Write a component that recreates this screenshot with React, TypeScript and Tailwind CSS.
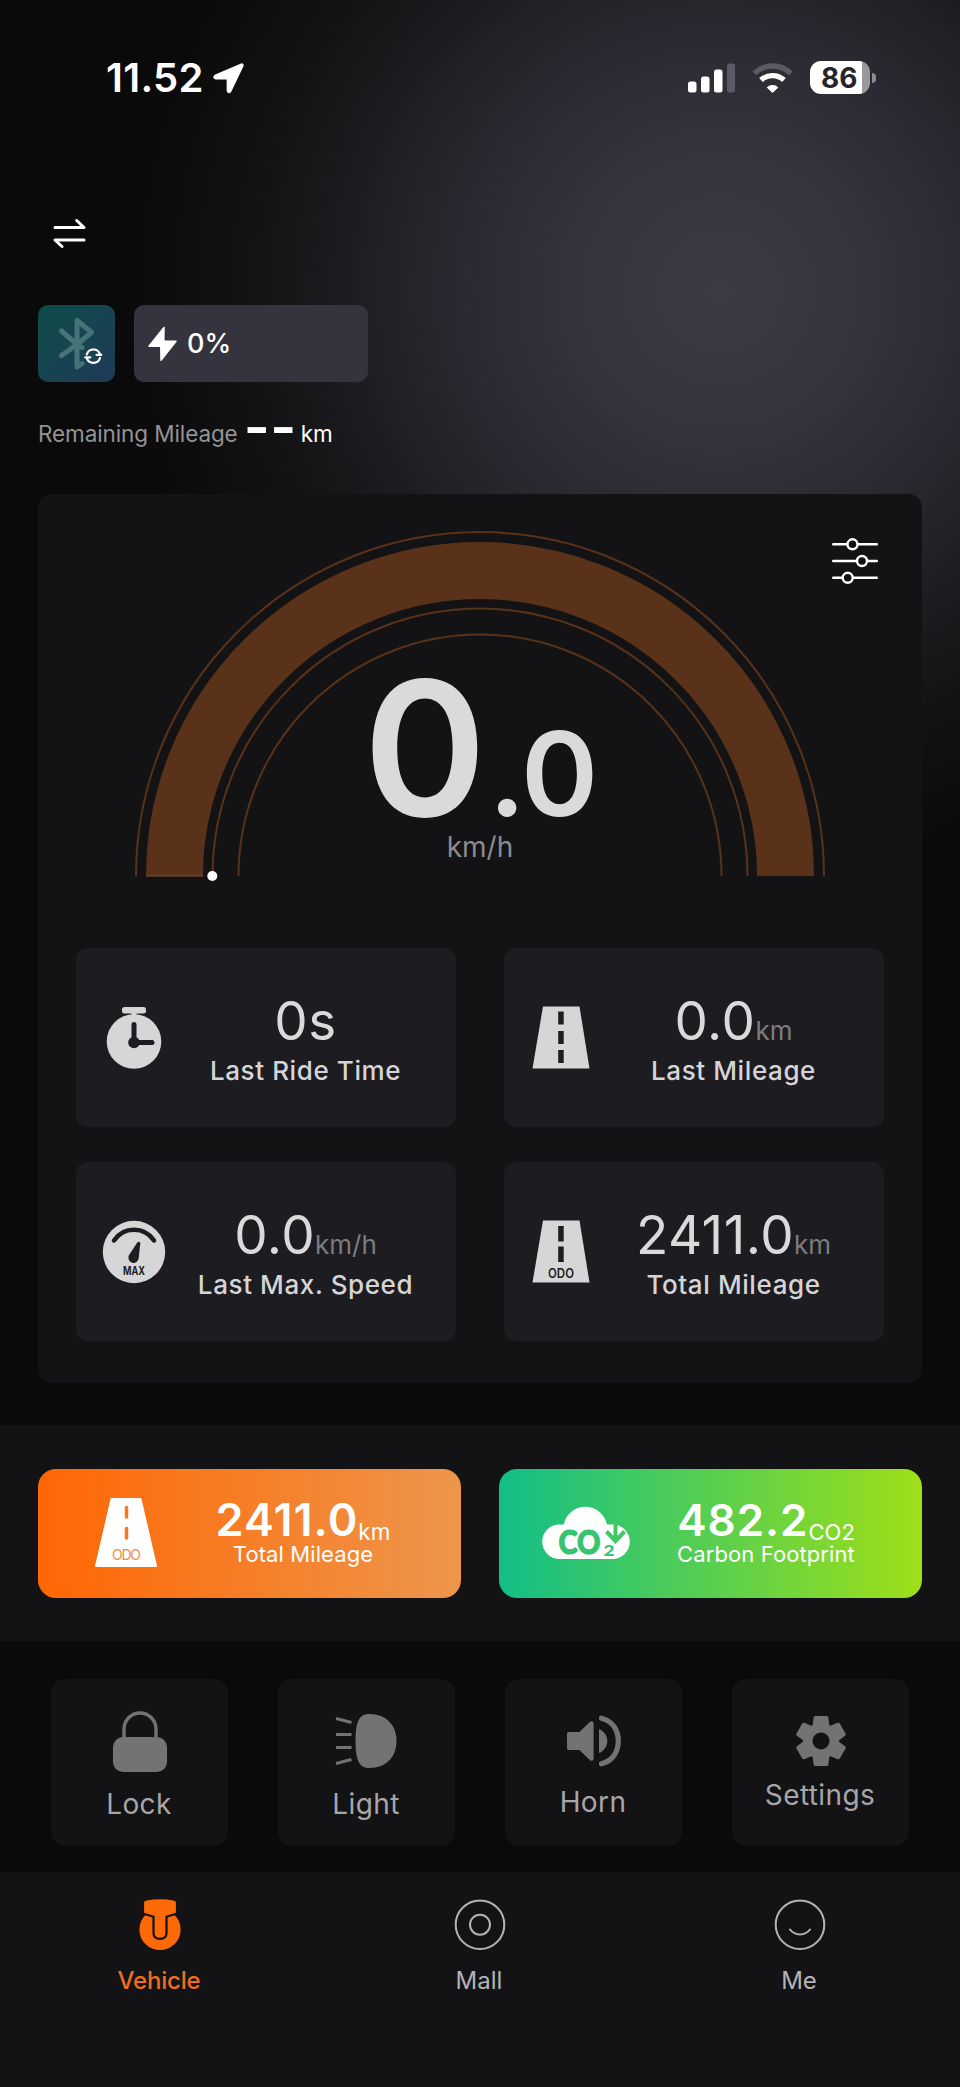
import React from 'react';

interface StatTileProps {
  icon: React.ReactNode;
  value: string;
  unit?: string;
  label: string;
}

interface ActionButtonProps {
  icon: React.ReactNode;
  label: string;
  labelClass: string; // Icons differ in height, so each label carries its own offset
}

/** Top status bar: clock, signal, wifi and battery. */
const StatusBar: React.FC = () => (
  <div className="flex h-12 items-center justify-between pl-[106px] pr-[84px]">
    <div className="flex items-center gap-[8px]">
      <span className="text-[40px] leading-[48px] font-semibold tracking-[0.3px]">11.52</span>
      <svg width="33" height="33" viewBox="0 0 32 32" fill="currentColor">
        <path
          d="M28.6 2.4 3 13.4c-1.3.7-.9 2.5.6 2.6H15.2v11.8c.1 1.6 2 2 2.7.5L29.6 3.6c.4-.9-.2-1.5-1-1.2z"
          stroke="currentColor"
          strokeWidth="2"
          strokeLinejoin="round"
        />
      </svg>
    </div>
    <div className="flex items-center pb-px">
      <svg width="48" height="32" viewBox="0 0 48 32" fill="white">
        <rect x="0" y="19.5" width="8.5" height="11" rx="2.5" />
        <rect x="13" y="14.5" width="8.5" height="16" rx="2.5" />
        <rect x="26" y="7.5" width="8.5" height="23" rx="2.5" />
        <rect x="39" y="1.5" width="8" height="29" rx="2.5" fill="#5b5a63" />
      </svg>
      <svg className="ml-4" width="41" height="32" viewBox="0 0 41 32" fill="none">
        <path d="M2.2 11.4A26.5 26.5 0 0 1 38.8 11.4" stroke="#5b5a63" strokeWidth="5.4" />
        <path d="M9 18.1a17 17 0 0 1 23 0" stroke="white" strokeWidth="5.4" />
        <path d="M20.5 31l-5.8-5.6a8.4 8.4 0 0 1 11.6 0z" fill="white" />
      </svg>
      <div className="ml-[17px] flex h-[33px] w-[60px] items-center overflow-hidden rounded-[11px] bg-linear-to-r from-white from-87% to-[#98989d] to-87%">
        <span className="pl-[11px] text-[28px] leading-none font-bold text-[#26252b]">86</span>
      </div>
      <div className="ml-[2px] h-[10px] w-1 rounded-r-full bg-[#8b8a90]" />
    </div>
  </div>
);

const BluetoothBadge: React.FC = () => (
  <div className="h-[77px] w-[77px] rounded-[10px] bg-linear-to-br from-[#0c4c49] to-[#1e3a57]">
    <svg width="77" height="77" viewBox="0 0 77 77" fill="none" strokeLinecap="round" strokeLinejoin="round">
      <path
        d="M23.5 26 39 39.5 53.5 27.3 39 15.5V62l5-3.5M39 39.5 23.5 50.5M39 39.5l5 3"
        stroke="#457378"
        strokeWidth="5"
      />
      <g stroke="white" strokeWidth="2.2">
        <path d="M48.8 49.4a6.9 6.9 0 0 1 13.2 0M48.8 53a6.9 6.9 0 0 0 13.2 0" />
        <path d="M58.5 49.8h4.8M47.3 52.4h5" />
      </g>
    </svg>
  </div>
);

/** Half circle speed gauge with the current speed inside. */
const SpeedGauge: React.FC = () => (
  <div className="relative mx-auto h-[352px] w-[700px]">
    <svg width="700" height="352" viewBox="0 0 700 352" fill="none" stroke="#593219">
      <path d="M6 346a344 344 0 0 1 688 0" strokeWidth="2" />
      <path d="M44.5 346a305.5 305.5 0 0 1 611 0" strokeWidth="57" />
      <path d="M82.5 346a267.5 267.5 0 0 1 535 0" strokeWidth="2" />
      <path d="M108.5 346a241.5 241.5 0 0 1 483 0" strokeWidth="2" />
      <path d="M16 346h57" stroke="#84502a" strokeWidth="1" />
      <circle cx="82.3" cy="346" r="5" fill="white" stroke="none" />
    </svg>
    <div className="absolute inset-x-0 top-[126px] text-center text-[#dadadb]">
      <div className="h-[184px] leading-[184px] font-semibold">
        <span className="text-[187px] tracking-[-4px]">0</span>
        <span className="ml-[6px] text-[117px] tracking-[-1.5px]">.0</span>
      </div>
      <div className="mt-[-11px] text-[28px] leading-9 text-[#8b8b8d]">km/h</div>
    </div>
  </div>
);

const StatTile: React.FC<StatTileProps> = ({ icon, value, unit, label }) => (
  <div className="grid h-[179px] grid-cols-[79px_1fr] rounded-xl bg-[#1d1c21]">
    <div className="flex w-[115px] items-center justify-center">{icon}</div>
    <div className="pt-[43px] text-center">
      <div className="h-[60px] text-[53px] leading-[60px] tracking-[0.5px] text-[#dadadb]">
        {value}
        {unit && <span className="text-[26px] leading-none tracking-normal text-[#7c7c7f]">{unit}</span>}
      </div>
      <div className="mt-[4px] text-[26px] leading-8 font-medium tracking-[0.6px] text-[#d5d5d7]">{label}</div>
    </div>
  </div>
);

const TimerIcon: React.FC = () => (
  <svg width="64" height="64" viewBox="0 0 64 64" fill="#d6d6d7">
    <rect x="20" y="1" width="24" height="6.5" rx="2.5" />
    <rect x="29.5" y="5" width="5" height="8" />
    <circle cx="32" cy="35.5" r="27.3" />
    <path d="M32 18.5V36.5H50" fill="none" stroke="#1d1c21" strokeWidth="5" strokeLinecap="round" />
    <circle cx="32" cy="36.5" r="5.8" fill="#1d1c21" />
  </svg>
);

const MaxSpeedIcon: React.FC = () => (
  <svg width="64" height="64" viewBox="0 0 64 64" fill="#d6d6d7">
    <circle cx="32" cy="32" r="31.2" />
    <path d="M12 20.5a24 24 0 0 1 40 0" fill="none" stroke="#1d1c21" strokeWidth="4.5" strokeLinecap="round" />
    <path d="M35.3 22.6c1-1.5 3.2-.8 3 1l-1.6 14.5a5.2 5.2 0 1 1-9.8-2.8z" fill="#1d1c21" />
    <text x="32" y="54.5" textAnchor="middle" fontSize="11.5" fontWeight="700" fill="#1d1c21" textLength="22" lengthAdjust="spacingAndGlyphs">
      MAX
    </text>
  </svg>
);

const RoadIcon: React.FC<{ odo?: boolean }> = ({ odo }) => (
  <svg className="mr-px" width="58" height="63" viewBox="0 0 58 63" fill="#d6d6d7">
    <path d="M11 .5h36.5l10 62H.5z" />
    {odo ? (
      <g fill="#1d1c21">
        <path d="M26.2 6h5.5v15.5h-5.5zM26.2 26.5h5.5V42h-5.5z" />
        <text x="29" y="57.5" textAnchor="middle" fontSize="13" fontWeight="600" textLength="26" lengthAdjust="spacingAndGlyphs">
          ODO
        </text>
      </g>
    ) : (
      <path fill="#1d1c21" d="M26.2 5.5h5.5v13h-5.5zM26.2 25h5.5v13h-5.5zM26.2 44h5.5v13h-5.5z" />
    )}
  </svg>
);

const OdoBadge: React.FC = () => (
  <svg className="mb-px" width="64" height="70" viewBox="0 0 64 70">
    <path d="M17.5 1h29l15.5 67H2z" fill="white" stroke="white" strokeWidth="2" strokeLinejoin="round" />
    <path d="M32.5 9.5v9.5M32.5 30.5v9.5" stroke="#f9761c" strokeWidth="3.5" strokeLinecap="round" />
    <text x="32.5" y="62" textAnchor="middle" fontSize="14" fill="#f28a45" textLength="29">
      ODO
    </text>
  </svg>
);

const CarbonIcon: React.FC = () => (
  <svg className="mb-[5px]" width="88" height="57" viewBox="0 0 88 57">
    <path d="M17.5 56a17.3 17.3 0 0 1 0-34.6c1.5 0 3 .1 4.2.4a22 22 0 0 1 43.2-.4h5.6a17.3 17.3 0 0 1 0 34.6z" fill="white" />
    <g className="font-[Lato]" fontWeight="900" fill="#36c470">
      <text x="16.5" y="51" fontSize="32" stroke="#36c470" strokeWidth="1.2" textLength="42" lengthAdjust="spacingAndGlyphs">
        CO
      </text>
      <text x="61.5" y="52.5" fontSize="15" textLength="11" lengthAdjust="spacingAndGlyphs">
        2
      </text>
    </g>
    <path d="M73.5 20v18M64.5 28.5l9 9.5 9-9.5" fill="none" stroke="#40c865" strokeWidth="4" />
  </svg>
);

const GearIcon: React.FC = () => (
  <svg width="52" height="52" viewBox="-26 -26 52 52" fill="currentColor">
    <circle r="13.3" fill="none" stroke="currentColor" strokeWidth="9.6" />
    {[0, 60, 120, 180, 240, 300].map((angle) => (
      <path
        key={angle}
        transform={`rotate(${angle})`}
        d="M-5.8-25H5.8q1.4 0 1.6 1.5l.9 7.5-2 3.5h-12.6l-2-3.5.9-7.5q.2-1.5 1.6-1.5z"
      />
    ))}
  </svg>
);

const ActionButton: React.FC<ActionButtonProps> = ({ icon, label, labelClass }) => (
  <button className="flex h-[167px] w-[177px] flex-col items-center rounded-[14px] bg-[#131315] pt-[29px] text-[#737375]">
    <div className="flex h-[66px] items-center justify-center">{icon}</div>
    <span className={`mr-px text-[28px] leading-9 tracking-[0.4px] text-[#a6a6a8] ${labelClass}`}>{label}</span>
  </button>
);

const App: React.FC = () => {
  return (
    <div className="flex h-[2087px] w-[960px] flex-col overflow-hidden bg-[#0a0a0a] bg-[radial-gradient(circle_600px_at_720px_290px,#3c3b45_0%,#36353f_22%,#2b2a32_42%,#1d1d21_62%,#121214_80%,#0a0a0a_100%)] font-['Inter','Liberation_Sans',sans-serif] text-white">
      <header className="h-[494px] shrink-0 pt-[54px]">
        <StatusBar />
        <svg
          className="mt-[114px] ml-[51px]"
          width="36"
          height="36"
          viewBox="0 0 36 36"
          fill="none"
          stroke="white"
          strokeWidth="3"
          strokeLinecap="round"
          strokeLinejoin="round"
        >
          <path d="M4 11.5h29l-7.3-7M33 24H4l7 6.5" />
        </svg>
        <div className="mt-[53px] flex gap-[19px] pl-[38px]">
          <BluetoothBadge />
          <div className="flex h-[77px] w-[234px] items-center rounded-[10px] bg-[#35343e] pl-[13px]">
            <svg width="31" height="36" viewBox="0 0 31 36" fill="white" stroke="white" strokeWidth="1.5" strokeLinejoin="round">
              <path d="M17 1.5 2 20.3h11.8L14 34.3 29 15.2H16.8z" />
            </svg>
            <span className="mt-[2px] ml-[9px] text-[27px] font-medium">0%</span>
          </div>
        </div>
        <div className="mt-[34px] flex h-9 items-center pl-[38px] text-[22.5px] leading-9">
          <span className="tracking-[-0.1px] text-[#939395]">Remaining Mileage</span>
          <span className="mt-[-15px] ml-[6px] text-[56px] leading-9 font-semibold tracking-[0.5px]">--</span>
          <span className="ml-[4px] tracking-[-0.2px]">km</span>
        </div>
      </header>

      <main className="mx-[38px] h-[889px] shrink-0 rounded-[14px] bg-[#131315]">
        <div className="relative pt-[36px]">
          <SpeedGauge />
          <svg
            className="absolute top-[43px] right-[42px]"
            width="50"
            height="50"
            viewBox="0 0 50 50"
            fill="#131315"
            stroke="white"
            strokeWidth="2.4"
            strokeLinecap="round"
          >
            <path d="M3.2 7.3h43.6M3.2 24h43.6M3.2 40.8h43.6" />
            <circle cx="22.5" cy="7.3" r="5" />
            <circle cx="32" cy="24" r="5" />
            <circle cx="17.7" cy="40.8" r="5" />
          </svg>
        </div>
        <div className="mt-[66px] grid grid-cols-2 gap-x-12 gap-y-[35px] px-[38px]">
          <StatTile icon={<TimerIcon />} value="0s" label="Last Ride Time" />
          <StatTile icon={<RoadIcon />} value="0.0" unit="km" label="Last Mileage" />
          <StatTile icon={<MaxSpeedIcon />} value="0.0" unit="km/h" label="Last Max. Speed" />
          <StatTile icon={<RoadIcon odo />} value="2411.0" unit="km" label="Total Mileage" />
        </div>
      </main>

      <section className="mt-[42px] flex h-[216px] shrink-0 justify-between bg-[#131315] px-[38px] pt-11">
        <div className="flex h-[129px] w-[423px] items-center rounded-[18px] bg-linear-to-r/srgb from-[#ff6604] to-[#ed964b] pl-14">
          <OdoBadge />
          <div className="-mt-1 ml-[55px] w-[180px] text-center">
            <div className="h-[46px] text-[45px] leading-[46px] font-semibold tracking-[1px] whitespace-nowrap">
              2411.0
              <span className="relative top-[4px] text-[22.5px] leading-none font-normal tracking-normal">km</span>
            </div>
            <div className="-mt-px text-[22px] leading-6 tracking-[0.1px]">Total Mileage</div>
          </div>
        </div>
        <div className="flex h-[129px] w-[423px] items-center rounded-[18px] bg-linear-to-r/srgb from-[#12be87] to-[#9fdf17] pl-[43px]">
          <CarbonIcon />
          <div className="-mt-1 ml-[45px] w-[182px] text-center">
            <div className="h-[46px] text-[44px] leading-[46px] font-semibold tracking-[1px] whitespace-nowrap">
              482.2
              <span className="relative top-[4px] text-[22px] leading-none font-normal tracking-normal">CO2</span>
            </div>
            <div className="-mt-px text-[22px] leading-6 tracking-[0.1px]">Carbon Footprint</div>
          </div>
        </div>
      </section>

      <section className="mt-[38px] flex h-[193px] shrink-0 justify-between px-[51px]">
        <ActionButton
          label="Lock"
          labelClass="mt-[12px]"
          icon={
            <svg width="60" height="64" viewBox="0 0 60 64">
              <path d="M14 30V20a15.5 15.5 0 0 1 32 0v10" fill="none" stroke="currentColor" strokeWidth="3.4" />
              <rect x="3" y="28" width="54" height="35" rx="10" fill="currentColor" />
            </svg>
          }
        />
        <ActionButton
          label="Light"
          labelClass="mt-[12px]"
          icon={
            <svg className="mr-px" width="62" height="56" viewBox="0 0 62 56">
              <path d="M34 1C52 1 61.5 13 61.5 28S52 55 34 55C24 55 20.5 47 20.5 28S24 1 34 1z" fill="currentColor" />
              <path d="M1 5.5l15.5 4M1 21.5h15.5M1 34.5h15.5M1 50.5l15.5-4" stroke="currentColor" strokeWidth="3" />
            </svg>
          }
        />
        <ActionButton
          label="Horn"
          labelClass="mt-[10px]"
          icon={
            <svg width="56" height="52" viewBox="0 0 56 52" fill="currentColor">
              <path d="M3 17h10.5L24 6.8c1.5-1.3 3.6-.5 3.6 1.5v35.4c0 2-2.1 2.8-3.6 1.5L13.5 35H3c-1.3 0-2-.8-2-2V19c0-1.2.7-2 2-2zM33 14c5 2 8.3 6.5 8.3 12S38 36 33 38z" />
              <path
                d="M35.5 3.2C47 6 52.3 15.5 52.3 26S47 46 35.5 48.8"
                fill="none"
                stroke="currentColor"
                strokeWidth="5.2"
                strokeLinecap="round"
              />
            </svg>
          }
        />
        <ActionButton label="Settings" labelClass="mt-[3px]" icon={<GearIcon />} />
      </section>

      <nav className="grid flex-1 grid-cols-3 bg-[#131315] pt-[26px] text-center text-[24px] leading-[30px] text-[#b3b3b5]">
        <div className="flex flex-col items-center text-[#ff6a06]">
          <svg width="52" height="54" viewBox="0 0 52 54" fill="currentColor">
            <circle cx="26" cy="31.5" r="20.6" />
            <path
              d="M9 4.5C9 2.5 10.5 1.7 12.5 1.4a80 80 0 0 1 27 0c2 .3 3.5 1.1 3.5 3.1V15.5L32.5 18.8V35c0 4-2.5 5.8-6.5 5.8S19.5 39 19.5 35V18.8L9 15.5z"
              stroke="#131315"
              strokeWidth="2.2"
            />
          </svg>
          <span className="mt-[14px] mr-[2px] font-medium tracking-[-0.2px] text-[#f06d1f]">Vehicle</span>
        </div>
        <div className="flex flex-col items-center">
          <svg width="52" height="54" viewBox="0 0 52 54" fill="none" stroke="currentColor" strokeWidth="2">
            <circle cx="26" cy="26.7" r="24.3" />
            <circle cx="26" cy="26.7" r="10" />
          </svg>
          <span className="mt-[14px] mr-[2px]">Mall</span>
        </div>
        <div className="flex flex-col items-center">
          <svg width="52" height="54" viewBox="0 0 52 54" fill="none" stroke="currentColor" strokeWidth="2" strokeLinecap="round">
            <circle cx="26" cy="26.7" r="24.3" />
            <path d="M16 31.5c5 6.5 15 6.5 20 0" />
          </svg>
          <span className="mt-[14px] mr-[2px]">Me</span>
        </div>
      </nav>
    </div>
  );
};

export default App;
